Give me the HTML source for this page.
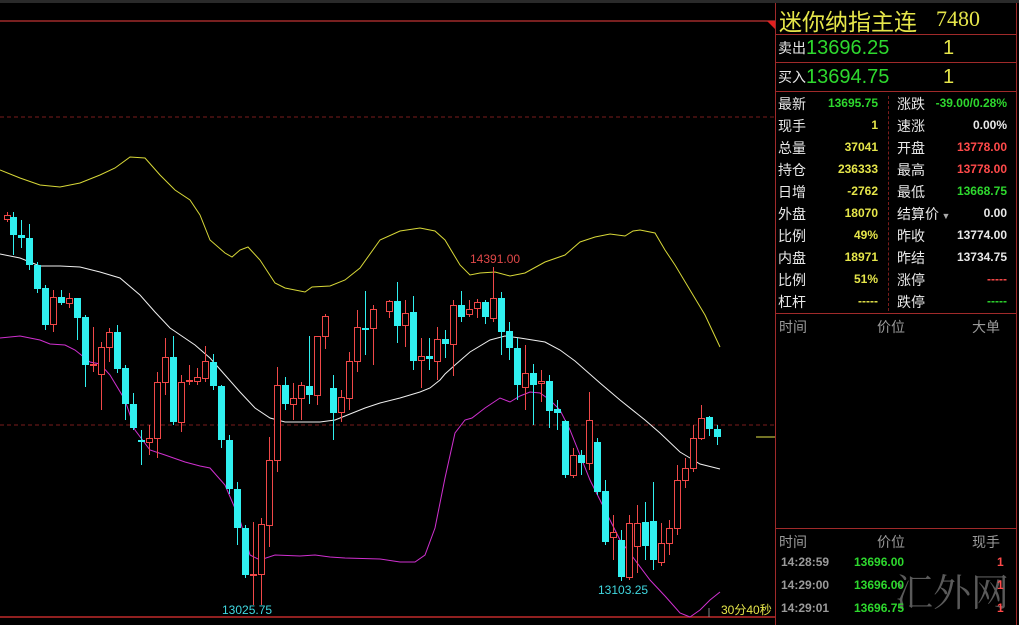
<!DOCTYPE html>
<html><head><meta charset="utf-8"><style>
*{margin:0;padding:0;box-sizing:border-box}
body{width:1019px;height:625px;background:#000;overflow:hidden;position:relative;font-family:"Liberation Sans","Noto Sans CJK SC",sans-serif}
.t{position:absolute;white-space:nowrap}
.p{position:absolute;left:775px;top:0;width:242px;height:625px;overflow:hidden}
.w{color:#e8e8e8}.y{color:#e6e64a}.g{color:#2ed82e}.r{color:#ff4a4a}.gr{color:#9a9a9a}
.lab{position:absolute;font-size:14px;color:#e8e8e8}
.val{position:absolute;font-size:12px;font-weight:bold;text-align:right}
</style></head><body>
<div style="position:absolute;left:0;top:0;width:1019px;height:3px;background:#2a2a2a"></div>
<svg id="c" width="1019" height="625" style="position:absolute;left:0;top:0">
<line x1="0" y1="21" x2="775" y2="21" stroke="#a02a2a" stroke-width="1.5"/>
<polygon points="767,21 775,21 775,29" fill="#e02020"/>
<line x1="0" y1="117" x2="775" y2="117" stroke="#7a1c1c" stroke-dasharray="4,3"/>
<line x1="0" y1="425" x2="775" y2="425" stroke="#7a1c1c" stroke-dasharray="4,3"/>
<line x1="0" y1="617" x2="775" y2="617" stroke="#c02a2a" stroke-width="1.5"/>
<line x1="756" y1="437" x2="775" y2="437" stroke="#e6e64a"/>
<line x1="709" y1="608" x2="709" y2="617" stroke="#888"/>
<polyline fill="none" stroke="#d8d838" points="0,170 20,178 40,185 60,187 80,183 100,175 115,168 130,157 145,158 160,175 175,190 190,200 200,215 210,240 225,253 232,257 240,250 248,247 260,260 275,283 285,288 305,292 312,287 330,286 345,280 360,268 380,240 400,231 420,228 435,231 445,240 460,265 470,275 480,273 495,272 510,276 525,273 545,262 565,255 580,242 595,237 610,234 625,236 633,231 640,230 655,233 665,250 675,265 690,290 705,315 720,347"/>
<polyline fill="none" stroke="#f0f0f0" points="0,254 20,258 40,266 60,266 80,267 100,272 120,278 140,295 155,312 170,328 195,345 210,358 225,375 240,392 255,408 270,418 285,422 305,422 320,422 335,420 345,416 365,408 380,403 400,398 420,392 430,388 440,380 445,374 455,365 470,352 490,340 505,336 520,338 545,342 560,350 575,361 600,383 620,400 645,420 660,433 680,452 690,458 700,464 720,469"/>
<polyline fill="none" stroke="#d030d0" points="0,338 20,336 40,340 50,344 65,345 75,350 90,362 100,364 110,375 125,400 135,430 150,450 165,455 185,462 200,466 210,468 225,485 240,520 250,555 260,560 275,555 300,556 315,555 330,557 345,558 380,559 400,562 415,562 425,555 435,528 445,478 455,433 465,420 472,418 485,408 500,398 510,402 520,396 530,392 540,393 550,400 560,410 570,430 580,455 590,480 600,500 610,520 620,540 635,560 650,580 665,596 680,613 690,617"/>
<polyline fill="none" stroke="#d030d0" points="690,617 700,610 710,600 720,592"/>
</svg>
<div class="t" style="left:470px;top:252px;font-size:12px;color:#e04848">14391.00</div>
<div class="t" style="left:222px;top:603px;font-size:12px;color:#40d8e0">13025.75</div>
<div class="t" style="left:598px;top:583px;font-size:12px;color:#40d8e0">13103.25</div>
<div class="t" style="left:721px;top:601px;font-size:12px;color:#e6e64a">30分40秒</div>

<div class="p">
<div style="position:absolute;left:0;top:3px;width:1px;height:622px;background:#a02a2a"></div>
<div style="position:absolute;left:241px;top:3px;width:1px;height:622px;background:#a02a2a"></div>
<div class="t y" style="left:4px;top:3px;font-size:23px">迷你纳指主连</div>
<div class="t y" style="left:161px;top:6px;font-size:22px;font-family:'Liberation Serif',serif">7480</div>
<div style="position:absolute;left:0;top:34px;width:242px;height:1px;background:#a02a2a"></div>
<div class="t w" style="left:3px;top:38px;font-size:14px">卖出</div>
<div class="t g" style="left:31px;top:37px;font-size:20px">13696.25</div>
<div class="t y" style="left:168px;top:37px;font-size:20px">1</div>
<div style="position:absolute;left:0;top:62px;width:242px;height:1px;background:#a02a2a"></div>
<div class="t w" style="left:3px;top:67px;font-size:14px">买入</div>
<div class="t g" style="left:31px;top:66px;font-size:20px">13694.75</div>
<div class="t y" style="left:168px;top:66px;font-size:20px">1</div>
<div style="position:absolute;left:0;top:91px;width:242px;height:1px;background:#a02a2a"></div>
<div style="position:absolute;left:113px;top:96px;width:0;height:215px;border-left:1px dashed #7a1c1c"></div>
<div id="grid"></div>
<div style="position:absolute;left:0;top:313px;width:242px;height:1px;background:#a02a2a"></div>
<div class="t gr" style="left:4px;top:317px;font-size:14px">时间</div>
<div class="t gr" style="left:102px;top:317px;font-size:14px">价位</div>
<div class="t gr" style="left:197px;top:317px;font-size:14px">大单</div>
<div style="position:absolute;left:0;top:528px;width:242px;height:1px;background:#a02a2a"></div>
<div class="t gr" style="left:4px;top:532px;font-size:14px">时间</div>
<div class="t gr" style="left:102px;top:532px;font-size:14px">价位</div>
<div class="t gr" style="left:197px;top:532px;font-size:14px">现手</div>
<div class="t" style="left:120px;top:568px;font-size:38px;line-height:44px;color:rgba(120,120,120,.75);font-family:'Noto Serif CJK SC',serif">汇外网</div>
<div class="t gr" style="left:6px;top:555px;font-size:12px;font-weight:bold">14:28:59</div>
<div class="t g" style="left:79px;top:555px;font-size:12px;font-weight:bold">13696.00</div>
<div class="t r" style="left:222px;top:555px;font-size:12px;font-weight:bold">1</div>
<div class="t gr" style="left:6px;top:578px;font-size:12px;font-weight:bold">14:29:00</div>
<div class="t g" style="left:79px;top:578px;font-size:12px;font-weight:bold">13696.00</div>
<div class="t r" style="left:222px;top:578px;font-size:12px;font-weight:bold">1</div>
<div class="t gr" style="left:6px;top:601px;font-size:12px;font-weight:bold">14:29:01</div>
<div class="t g" style="left:79px;top:601px;font-size:12px;font-weight:bold">13696.75</div>
<div class="t r" style="left:222px;top:601px;font-size:12px;font-weight:bold">1</div>
</div>
<script>
var rows=[["最新","13695.75","g","涨跌","-39.00/0.28%","g"],["现手","1","y","速涨","0.00%","w"],["总量","37041","y","开盘","13778.00","r"],["持仓","236333","y","最高","13778.00","r"],["日增","-2762","y","最低","13668.75","g"],["外盘","18070","y","结算价","0.00","w"],["比例","49%","y","昨收","13774.00","w"],["内盘","18971","y","昨结","13734.75","w"],["比例","51%","y","涨停","-----","r"],["杠杆","-----","y","跌停","-----","g"]];
var h="";rows.forEach(function(r,i){var t=94+i*22;
h+='<div class="lab" style="left:3px;top:'+t+'px">'+r[0]+'</div><div class="val '+r[2]+'" style="right:139px;top:'+(t+2)+'px">'+r[1]+'</div><div class="lab" style="left:122px;top:'+t+'px">'+r[3]+(r[3]=="结算价"?'<span style="font-size:9px;color:#aaa"> ▼</span>':'')+'</div><div class="val '+r[5]+'" style="right:10px;top:'+(t+2)+'px">'+r[4]+'</div>';});
document.getElementById("grid").innerHTML=h;
var C=[[2,"r",215,219,212,222],[8,"c",217,235,212,255],[16,"c",235,238,220,248],[24,"c",238,265,224,270],[32,"c",265,289,262,293],[40,"c",288,325,285,330],[48,"r",297,324,290,332],[56,"c",297,303,290,305],[64,"r",298,303,293,308],[72,"c",298,318,298,340],[80,"c",317,365,315,387],[88,"r",364,365,327,372],[96,"r",347,374,342,410],[104,"r",332,347,328,362],[112,"c",332,369,325,373],[120,"c",368,404,365,420],[128,"c",404,428,393,430],[136,"c",440,442,430,465],[144,"r",438,442,425,455],[152,"r",382,438,372,458],[160,"r",357,382,338,395],[168,"c",357,422,336,425],[176,"r",382,422,375,432],[184,"r",380,381,365,385],[192,"r",377,381,368,385],[200,"r",361,378,346,382],[208,"c",362,386,354,390],[216,"c",386,440,385,448],[224,"c",440,489,435,494],[232,"c",489,528,482,545],[240,"c",528,575,525,578],[248,"r",574,575,522,605],[256,"r",524,574,518,605],[264,"r",460,525,437,547],[272,"r",385,460,367,472],[280,"c",385,404,377,410],[288,"r",398,404,383,420],[296,"r",385,398,382,420],[304,"c",386,395,336,404],[312,"r",336,395,336,405],[320,"r",316,336,314,349],[328,"c",388,413,375,440],[336,"r",397,412,390,422],[344,"r",361,398,352,410],[352,"r",327,361,310,372],[360,"c",328,330,291,355],[368,"r",309,328,305,365],
[384,"r",301,311,300,318],[392,"c",301,326,282,343],[400,"r",313,325,300,347],[408,"c",312,361,296,370],[416,"r",356,360,338,388],[424,"c",356,359,338,370],[432,"r",339,361,327,380],[440,"c",339,344,330,358],[448,"r",305,344,300,376],[456,"c",305,317,291,322],[464,"r",309,314,300,317],[472,"r",302,308,299,318],[480,"c",302,317,300,324],[488,"r",298,318,267,322],[496,"c",298,332,292,355],[504,"c",331,348,322,360],[512,"c",348,385,338,400],[520,"r",373,387,345,410],[528,"c",373,385,364,425],[536,"r",381,383,370,402],[544,"c",381,411,375,428],[552,"c",409,413,400,430],[560,"c",421,475,420,478],[568,"r",455,475,448,478],[576,"c",455,463,450,475],[584,"r",420,463,392,470],[592,"c",442,492,438,495],[600,"c",491,542,480,545],[608,"r",532,537,515,560],[616,"c",540,577,530,581],[624,"r",523,577,515,580],[632,"r",523,546,505,573],[640,"c",522,546,502,560],[648,"c",521,560,482,570],[656,"r",543,562,523,566],[664,"r",528,543,520,555],[672,"r",480,528,465,535],[680,"r",468,480,458,488],[688,"r",438,468,425,472],[696,"r",418,438,405,440],[704,"c",417,429,416,436],[712,"c",429,437,425,445]];
var s="";C.forEach(function(k){var x=k[0]+2,col=k[1]=="r"?"#f04848":"#30f0f0";
s+='<line x1="'+(x+3.5)+'" y1="'+k[4]+'" x2="'+(x+3.5)+'" y2="'+k[5]+'" stroke="'+col+'"/>';
var hh=Math.max(1,k[3]-k[2]);
if(k[1]=="r")s+='<rect x="'+(x+0.5)+'" y="'+(k[2]+0.5)+'" width="6" height="'+hh+'" fill="#000" stroke="'+col+'"/>';
else s+='<rect x="'+x+'" y="'+k[2]+'" width="7" height="'+hh+'" fill="'+col+'"/>';});
document.getElementById("c").insertAdjacentHTML("beforeend",s);
</script>
</body></html>
